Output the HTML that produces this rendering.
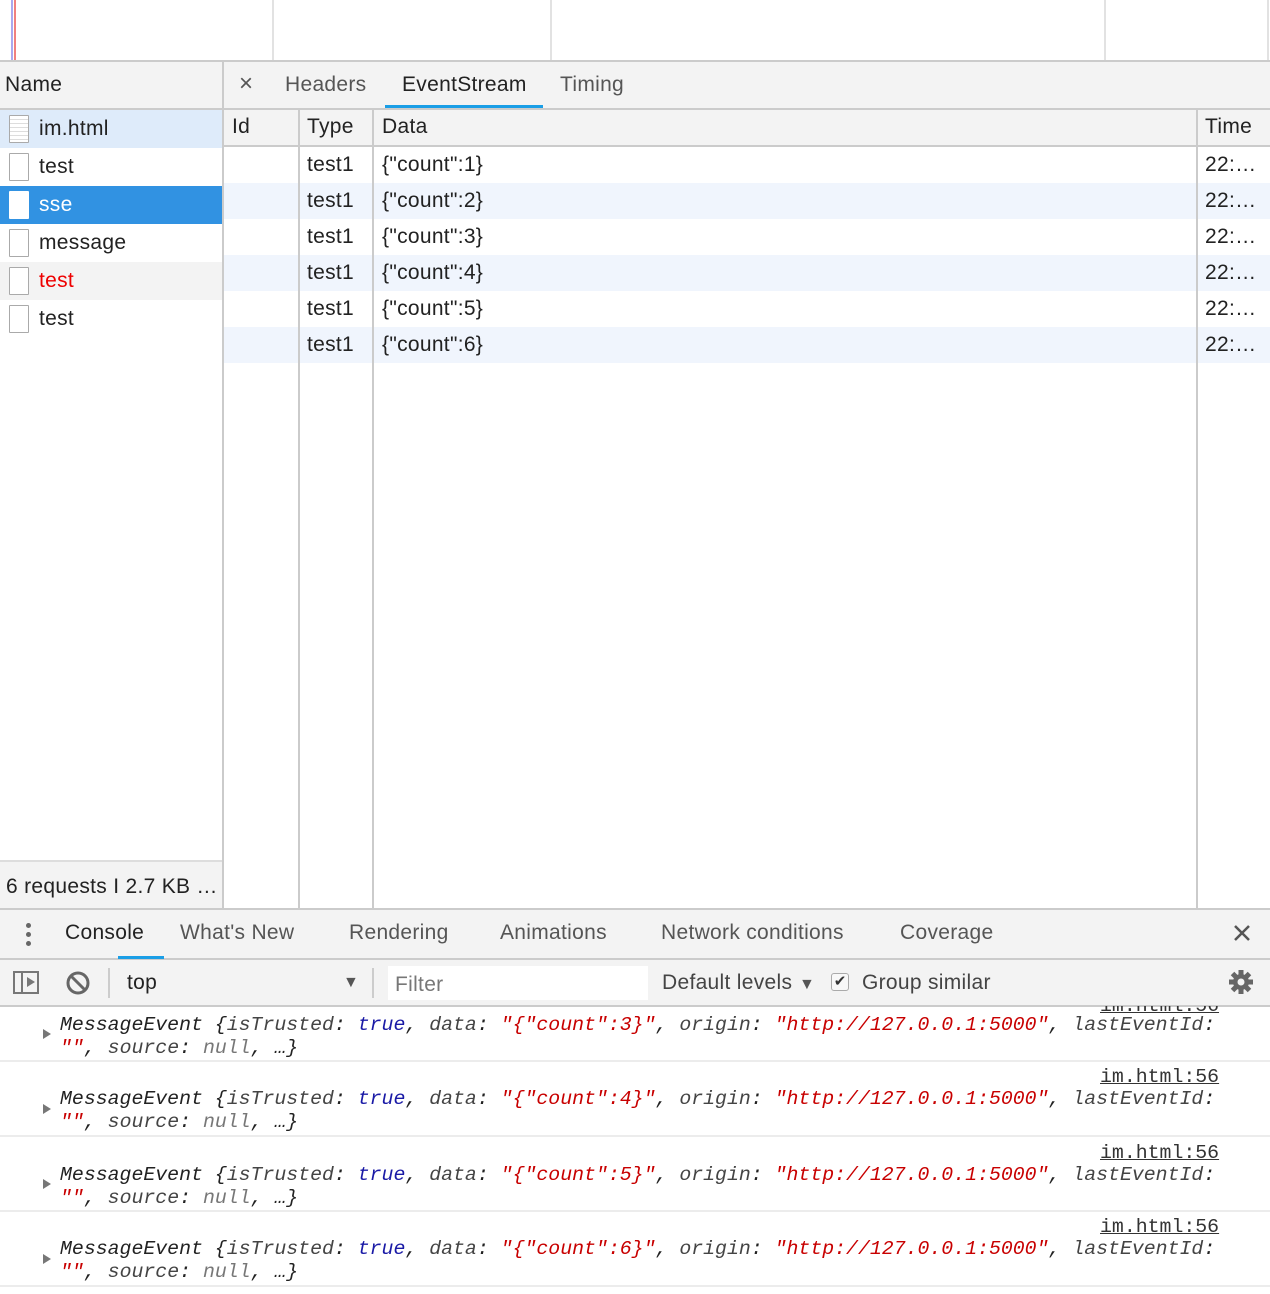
<!DOCTYPE html>
<html><head><meta charset="utf-8"><style>
*{margin:0;padding:0;box-sizing:border-box}
body{width:1270px;height:1294px;position:relative;overflow:hidden;background:#fff;font-family:"Liberation Sans",Arial,sans-serif;font-size:21px;letter-spacing:0.3px;color:#222}
.a{position:absolute}
.t{position:absolute;white-space:nowrap;line-height:24px}
.vl{position:absolute;width:2px;background:#cbcbcb}
.hl{position:absolute;height:2px;background:#cbcbcb}
.ic{position:absolute;left:9px;width:20px;height:28px;border:1.5px solid #aaa;background:#fff;border-radius:1px}
.mono{font-family:"Liberation Mono",monospace;font-style:italic;font-size:19.85px;letter-spacing:0;line-height:23px;color:#222;position:absolute;left:60px;white-space:pre}
.k{color:#444}.b{color:#1a1aa6}.r{color:#c80000}.g{color:#777}
.link{font-family:"Liberation Mono",monospace;font-size:19.85px;letter-spacing:0;position:absolute;left:1100px;text-decoration:underline;color:#333;line-height:23px}
.tri{position:absolute;left:43px;width:0;height:0;border-left:8px solid #777;border-top:5px solid transparent;border-bottom:5px solid transparent}
.sep{position:absolute;left:0;width:1270px;height:2px;background:#ececec}
</style></head><body>
<div class="a" style="left:11px;top:0;width:2px;height:60px;background:#a9a9f0"></div>
<div class="a" style="left:14px;top:0;width:2px;height:60px;background:#f08080"></div>
<div class="vl" style="left:272px;top:0;height:60px;background:#e2e2e2"></div>
<div class="vl" style="left:550px;top:0;height:60px;background:#e2e2e2"></div>
<div class="vl" style="left:1104px;top:0;height:60px;background:#e2e2e2"></div>
<div class="vl" style="left:1267px;top:0;height:60px;background:#e2e2e2"></div>
<div class="hl" style="left:0;top:60px;width:1270px"></div>
<div class="a" style="left:0;top:62px;width:1270px;height:46px;background:#f3f3f3"></div>
<div class="hl" style="left:0;top:108px;width:1270px"></div>
<div class="vl" style="left:222px;top:62px;height:846px"></div>
<div class="t" style="left:5px;top:73px">Name</div>
<div class="t" style="left:239px;top:72px;color:#555;font-size:24px">×</div>
<div class="t" style="left:285px;top:73px;color:#555">Headers</div>
<div class="t" style="left:402px;top:73px;color:#222">EventStream</div>
<div class="a" style="left:385px;top:105px;width:158px;height:3px;background:#1a9ee6"></div>
<div class="t" style="left:560px;top:73px;color:#555">Timing</div>
<div class="a" style="left:0;top:110px;width:222px;height:38px;background:#deebfa"></div>
<div class="a" style="left:0;top:186px;width:222px;height:38px;background:#3192e2"></div>
<div class="a" style="left:0;top:262px;width:222px;height:38px;background:#f3f3f3"></div>
<div class="ic" style="top:115px;background:repeating-linear-gradient(#fff 0 3px,#ddd 3px 4px)"></div><div class="t" style="left:39px;top:117px">im.html</div>
<div class="ic" style="top:153px"></div><div class="t" style="left:39px;top:155px">test</div>
<div class="ic" style="top:191px;border-color:#fff"></div><div class="t" style="left:39px;top:193px;color:#fff">sse</div>
<div class="ic" style="top:229px"></div><div class="t" style="left:39px;top:231px">message</div>
<div class="ic" style="top:267px"></div><div class="t" style="left:39px;top:269px;color:#e00">test</div>
<div class="ic" style="top:305px"></div><div class="t" style="left:39px;top:307px">test</div>
<div class="a" style="left:0;top:860px;width:222px;height:48px;background:#f3f3f3;border-top:2px solid #ddd"></div>
<div class="t" style="left:6px;top:875px">6 requests I 2.7 KB …</div>
<div class="a" style="left:224px;top:110px;width:1046px;height:35px;background:#f3f3f3"></div>
<div class="hl" style="left:224px;top:145px;width:1046px"></div>
<div class="vl" style="left:298px;top:110px;height:798px"></div>
<div class="vl" style="left:372px;top:110px;height:798px"></div>
<div class="vl" style="left:1196px;top:110px;height:798px"></div>
<div class="t" style="left:232px;top:115px">Id</div>
<div class="t" style="left:307px;top:115px">Type</div>
<div class="t" style="left:382px;top:115px">Data</div>
<div class="t" style="left:1205px;top:115px">Time</div>
<div class="a" style="left:224px;top:183px;width:1046px;height:36px;background:#f0f5fd;z-index:-1"></div>
<div class="a" style="left:224px;top:255px;width:1046px;height:36px;background:#f0f5fd;z-index:-1"></div>
<div class="a" style="left:224px;top:327px;width:1046px;height:36px;background:#f0f5fd;z-index:-1"></div>
<div class="t" style="left:307px;top:153px">test1</div><div class="t" style="left:382px;top:153px">{"count":1}</div><div class="t" style="left:1205px;top:153px">22:…</div>
<div class="t" style="left:307px;top:189px">test1</div><div class="t" style="left:382px;top:189px">{"count":2}</div><div class="t" style="left:1205px;top:189px">22:…</div>
<div class="t" style="left:307px;top:225px">test1</div><div class="t" style="left:382px;top:225px">{"count":3}</div><div class="t" style="left:1205px;top:225px">22:…</div>
<div class="t" style="left:307px;top:261px">test1</div><div class="t" style="left:382px;top:261px">{"count":4}</div><div class="t" style="left:1205px;top:261px">22:…</div>
<div class="t" style="left:307px;top:297px">test1</div><div class="t" style="left:382px;top:297px">{"count":5}</div><div class="t" style="left:1205px;top:297px">22:…</div>
<div class="t" style="left:307px;top:333px">test1</div><div class="t" style="left:382px;top:333px">{"count":6}</div><div class="t" style="left:1205px;top:333px">22:…</div>
<div class="hl" style="left:0;top:908px;width:1270px"></div>
<div class="a" style="left:0;top:910px;width:1270px;height:48px;background:#f3f3f3"></div>
<div class="hl" style="left:0;top:958px;width:1270px"></div>
<div class="a" style="left:26px;top:923px;width:5px;height:5px;border-radius:50%;background:#666"></div>
<div class="a" style="left:26px;top:932px;width:5px;height:5px;border-radius:50%;background:#666"></div>
<div class="a" style="left:26px;top:941px;width:5px;height:5px;border-radius:50%;background:#666"></div>
<div class="t" style="left:65px;top:921px">Console</div>
<div class="a" style="left:118px;top:956px;width:46px;height:3px;background:#1a9ee6"></div>
<div class="t" style="left:180px;top:921px;color:#555">What's New</div>
<div class="t" style="left:349px;top:921px;color:#555">Rendering</div>
<div class="t" style="left:500px;top:921px;color:#555">Animations</div>
<div class="t" style="left:661px;top:921px;color:#555">Network conditions</div>
<div class="t" style="left:900px;top:921px;color:#555">Coverage</div>
<svg class="a" style="left:1233px;top:924px" width="18" height="18" viewBox="0 0 18 18"><path d="M2 2L16 16M16 2L2 16" stroke="#555" stroke-width="2.5"/></svg>
<div class="a" style="left:0;top:960px;width:1270px;height:46px;background:#f3f3f3"></div>
<div class="hl" style="left:0;top:1005px;width:1270px"></div>
<div class="a" style="left:13px;top:971px;width:26px;height:23px;border:2px solid #777"></div>
<div class="a" style="left:21px;top:971px;width:2px;height:23px;background:#777"></div>
<div class="a" style="left:27px;top:977px;border-left:8px solid #777;border-top:5.5px solid transparent;border-bottom:5.5px solid transparent"></div>
<svg class="a" style="left:65px;top:970px" width="26" height="26" viewBox="0 0 26 26"><circle cx="13" cy="13" r="10" fill="none" stroke="#666" stroke-width="3"/><line x1="6" y1="6" x2="20" y2="20" stroke="#666" stroke-width="3"/></svg>
<div class="a" style="left:108px;top:968px;width:2px;height:30px;background:#ccc"></div>
<div class="t" style="left:127px;top:971px">top</div>
<div class="t" style="left:343px;top:971px;color:#555;font-size:16px">▼</div>
<div class="a" style="left:372px;top:968px;width:2px;height:30px;background:#ccc"></div>
<div class="a" style="left:388px;top:966px;width:260px;height:34px;background:#fff"></div>
<div class="t" style="left:395px;top:973px;color:#777">Filter</div>
<div class="t" style="left:662px;top:971px;color:#444">Default levels</div>
<div class="t" style="left:799px;top:973px;color:#555;font-size:16px">▼</div>
<div class="a" style="left:831px;top:973px;width:18px;height:18px;border:1px solid #aaa;border-radius:3px;background:#f8f8f8;font-size:15px;line-height:16px;text-align:center;color:#333;letter-spacing:0">✔</div>
<div class="t" style="left:862px;top:971px;color:#444">Group similar</div>
<svg class="a" style="left:1228px;top:969px" width="26" height="26" viewBox="0 0 26 26"><g fill="#666"><circle cx="13" cy="13" r="8"/><rect x="10.5" y="1" width="5" height="24"/><rect x="1" y="10.5" width="24" height="5"/><rect x="10.5" y="1" width="5" height="24" transform="rotate(45 13 13)"/><rect x="10.5" y="1" width="5" height="24" transform="rotate(-45 13 13)"/></g><circle cx="13" cy="13" r="3.5" fill="#f3f3f3"/></svg>
<div class="link" style="top:994px;clip-path:inset(12px 0 0 0)">im.html:56</div>
<div class="tri" style="top:1029px"></div>
<div class="mono" style="top:1013px">MessageEvent {<span class="k">isTrusted</span>: <span class="b">true</span>, <span class="k">data</span>: <span class="r">"{"count":3}"</span>, <span class="k">origin</span>: <span class="r">"http://127.0.0.1:5000"</span>, <span class="k">lastEventId</span>:
<span class="r">""</span>, <span class="k">source</span>: <span class="g">null</span>, …}</div>
<div class="sep" style="top:1060px"></div>
<div class="link" style="top:1065px">im.html:56</div>
<div class="tri" style="top:1104px"></div>
<div class="mono" style="top:1087px">MessageEvent {<span class="k">isTrusted</span>: <span class="b">true</span>, <span class="k">data</span>: <span class="r">"{"count":4}"</span>, <span class="k">origin</span>: <span class="r">"http://127.0.0.1:5000"</span>, <span class="k">lastEventId</span>:
<span class="r">""</span>, <span class="k">source</span>: <span class="g">null</span>, …}</div>
<div class="sep" style="top:1135px"></div>
<div class="link" style="top:1141px">im.html:56</div>
<div class="tri" style="top:1179px"></div>
<div class="mono" style="top:1163px">MessageEvent {<span class="k">isTrusted</span>: <span class="b">true</span>, <span class="k">data</span>: <span class="r">"{"count":5}"</span>, <span class="k">origin</span>: <span class="r">"http://127.0.0.1:5000"</span>, <span class="k">lastEventId</span>:
<span class="r">""</span>, <span class="k">source</span>: <span class="g">null</span>, …}</div>
<div class="sep" style="top:1210px"></div>
<div class="link" style="top:1215px">im.html:56</div>
<div class="tri" style="top:1254px"></div>
<div class="mono" style="top:1237px">MessageEvent {<span class="k">isTrusted</span>: <span class="b">true</span>, <span class="k">data</span>: <span class="r">"{"count":6}"</span>, <span class="k">origin</span>: <span class="r">"http://127.0.0.1:5000"</span>, <span class="k">lastEventId</span>:
<span class="r">""</span>, <span class="k">source</span>: <span class="g">null</span>, …}</div>
<div class="sep" style="top:1285px"></div>
</body></html>
